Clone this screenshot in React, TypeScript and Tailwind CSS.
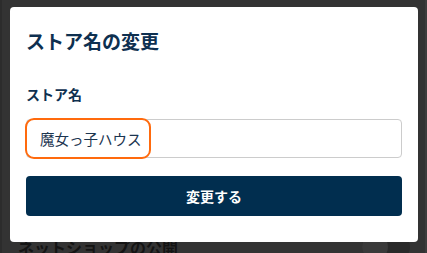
import React from "react";

export default function App() {
  const jp = { fontFamily: '"Noto Sans CJK JP", "Noto Sans", sans-serif' };
  return (
    <div className="relative w-[427px] h-[253px] overflow-hidden bg-[#333333]" style={jp}>
      {/* background page (dimmed) */}
      <div className="flex h-full">
        <div className="w-[2px] bg-[#2c2c2c]" />
        <div className="flex-1 flex flex-col justify-end">
          <div className="flex items-center justify-between pl-[16px] pr-[15px] h-[34px] translate-y-[11px]">
            <span className="text-[16px] font-bold text-[#141414] leading-[24px]">ネットショップの公開</span>
            <div className="relative w-[48px] h-[26px] rounded-full bg-[#292929]">
              <div className="absolute left-0 top-0 w-[26px] h-[26px] rounded-full bg-[#3a3a3a]" />
            </div>
          </div>
        </div>
        <div className="w-[2px] bg-[#3d3d3d]" />
      </div>

      {/* modal */}
      <div className="absolute left-[10px] top-[7px] w-[408px] h-[235px] bg-white rounded-[4px] px-[16px] pt-[22px] flex flex-col">
        <h2 className="text-[19px] leading-[24px] font-bold text-[#0e3050]">ストア名の変更</h2>
        <label className="mt-[31px] text-[14px] leading-[20px] font-bold text-[#0e3050]">ストア名</label>
        <div className="relative mt-[15px] h-[39px] rounded-[4px] border border-[#cccccc] flex items-center px-[13px]">
          <span className="text-[14.5px] text-[#1c3550]">魔女っ子ハウス</span>
          <div className="absolute left-[-2px] top-[-2px] w-[126px] h-[41px] rounded-[9px] border-[2.5px] border-[#ff6a0d]" />
        </div>
        <button className="mt-[18px] h-[40px] rounded-[4px] bg-[#012e4f] text-white text-[14px] font-bold">
          変更する
        </button>
      </div>
    </div>
  );
}
